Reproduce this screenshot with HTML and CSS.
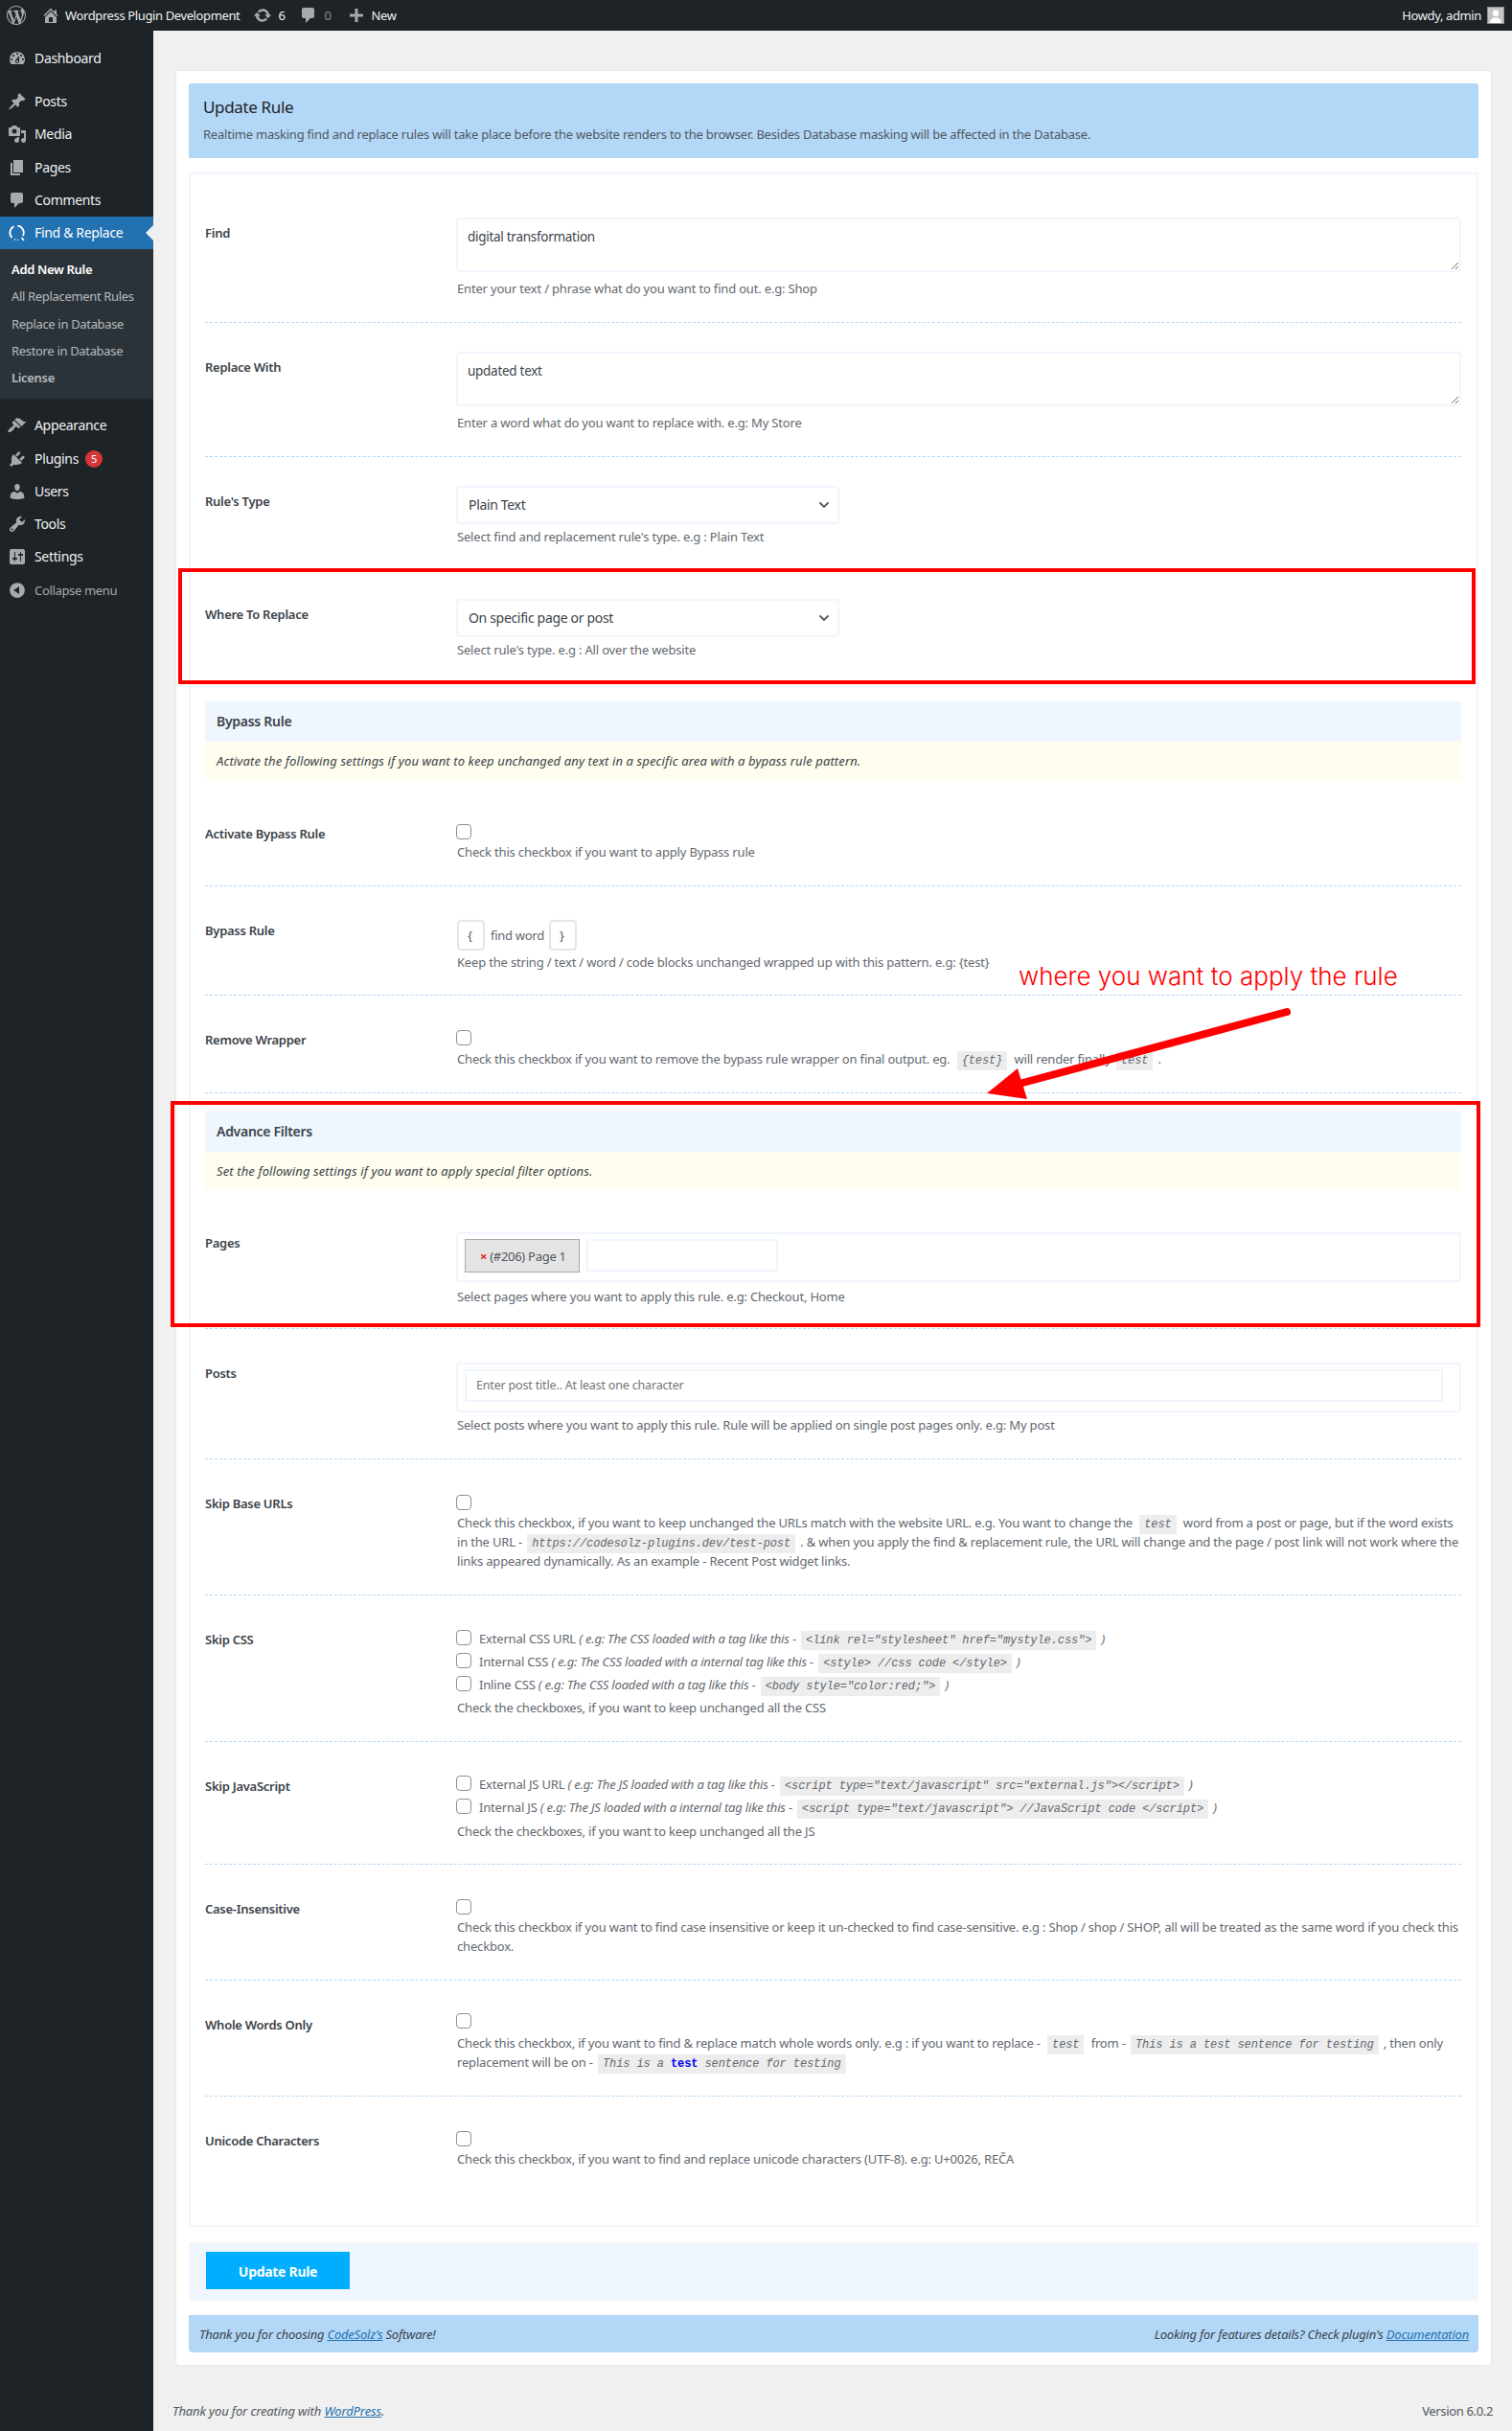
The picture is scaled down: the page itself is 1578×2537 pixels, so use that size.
FILE: index.html
```html
<!DOCTYPE html>
<html lang="en">
<head>
<meta charset="utf-8">
<title>Update Rule</title>
<link rel="stylesheet" href="styles.css">
</head>
<body>
<div class="adminbar">
  <svg class="ab-logo" viewBox="0 0 20 20"><path d="M20 10c0-5.51-4.49-10-10-10C4.48 0 0 4.49 0 10c0 5.52 4.48 10 10 10 5.51 0 10-4.48 10-10zM7.78 15.37L4.37 6.22c.55-.02 1.17-.08 1.17-.08.5-.06.44-1.13-.06-1.11 0 0-1.45.11-2.37.11-.18 0-.37 0-.58-.01C4.12 2.69 6.87 1.11 10 1.11c2.33 0 4.45.87 6.05 2.34-.68-.11-1.65.39-1.65 1.58 0 .74.45 1.36.9 2.1.35.61.55 1.36.55 2.46 0 1.49-1.4 5-1.4 5l-3.03-8.37c.54-.02.82-.17.82-.17.5-.05.44-1.25-.06-1.22 0 0-1.44.12-2.38.12-.87 0-2.33-.12-2.33-.12-.5-.03-.56 1.2-.06 1.22l.92.08 1.26 3.41zM17.41 10c.24-.64.74-1.87.43-4.25.7 1.29 1.05 2.71 1.05 4.25 0 3.29-1.73 6.24-4.4 7.78.97-2.59 1.94-5.2 2.92-7.78zM6.1 18.09C3.12 16.65 1.11 13.53 1.11 10c0-1.3.23-2.48.72-3.59C3.25 10.3 4.67 14.2 6.1 18.09zm4.03-6.63l2.58 6.98c-.86.29-1.76.45-2.71.45-.79 0-1.57-.11-2.29-.33.81-2.38 1.62-4.74 2.42-7.1z"/></svg>
  <svg class="ab-icon ab-home" viewBox="0 0 20 20"><path d="M16 8.5l1.53 1.53-1.06 1.06L10 4.62l-6.47 6.47-1.06-1.06L10 2.5l4 4v-2h2v4zm-6-2.46l6 5.99V18H4v-5.97zM12 17v-5H8v5h4z"/></svg>
  <span class="ab-text ab-site">Wordpress Plugin Development</span>
  <svg class="ab-icon ab-update" viewBox="0 0 20 20"><path d="M10.2 3.28c3.53 0 6.43 2.61 6.92 6h2.08l-3.5 4-3.5-4h2.32c-.45-1.97-2.21-3.45-4.32-3.45-1.45 0-2.73.71-3.54 1.78L4.95 5.66C6.23 4.2 8.11 3.28 10.2 3.28zm-.4 13.44c-3.52 0-6.43-2.61-6.92-6H.8l3.5-4c1.17 1.33 2.33 2.67 3.5 4H5.48c.45 1.97 2.21 3.45 4.32 3.45 1.45 0 2.73-.71 3.54-1.78l1.71 1.95c-1.28 1.46-3.15 2.38-5.25 2.38z"/></svg>
  <span class="ab-text ab-count">6</span>
  <svg class="ab-icon ab-comment" viewBox="0 0 20 20"><path d="M5 2h9c1.100 0 2 .9 2 2v7c0 1.100-.9 2-2 2h-2l-5 5v-5H5c-1.100 0-2-.9-2-2V4c0-1.100.9-2 2-2z"/></svg>
  <span class="ab-text ab-zero">0</span>
  <svg class="ab-icon ab-plus" viewBox="0 0 20 20"><path d="M17 8.500v3h-5.500V17h-3v-5.500H3v-3h5.500V3h3v5.500z"/></svg>
  <span class="ab-text ab-new">New</span>
  <span class="ab-text ab-howdy">Howdy, admin</span>
  <span class="ab-avatar"><svg viewBox="0 0 18 18"><circle cx="9" cy="6.500" r="3.600"/><path d="M2.500 18c0-4.500 3-6.500 6.500-6.500s6.500 2 6.500 6.500z"/></svg></span>
</div>

<div class="layout">
  <nav class="sidebar">
    <ul class="menu menu-first">
      <li class="menu-item"><svg viewBox="0 0 20 20"><path d="M3.760 16h12.480c1.100-1.370 1.760-3.110 1.760-5 0-4.420-3.580-8-8-8s-8 3.580-8 8c0 1.890.66 3.630 1.760 5zM10 4c.55 0 1 .45 1 1s-.45 1-1 1-1-.45-1-1 .45-1 1-1zM6 6c.55 0 1 .45 1 1s-.45 1-1 1-1-.45-1-1 .45-1 1-1zm8 0c.55 0 1 .45 1 1s-.45 1-1 1-1-.45-1-1 .45-1 1-1zm-5.370 5.550L12 7v6c0 1.100-.9 2-2 2s-2-.9-2-2c0-.57.24-1.080.63-1.450zM4 10c.55 0 1 .45 1 1s-.45 1-1 1-1-.45-1-1 .45-1 1-1zm12 0c.55 0 1 .45 1 1s-.45 1-1 1-1-.45-1-1 .45-1 1-1zm-5 3c0-.55-.45-1-1-1s-1 .45-1 1 .45 1 1 1 1-.45 1-1z"/></svg><span>Dashboard</span></li>
    </ul>
    <ul class="menu menu-group">
      <li class="menu-item"><svg viewBox="0 0 20 20"><path d="M10.440 3.020l1.820-1.820 6.360 6.350-1.830 1.820c-1.050-.68-2.480-.57-3.410.36l-.75.75c-.92.93-1.040 2.350-.35 3.410l-1.830 1.820-2.410-2.410-2.800 2.790c-.42.42-3.380 2.710-3.800 2.290s1.860-3.390 2.280-3.810l2.790-2.790L4.100 9.360l1.830-1.820c1.050.69 2.480.57 3.400-.36l.75-.75c.93-.92 1.050-2.350.36-3.410z"/></svg><span>Posts</span></li>
      <li class="menu-item"><svg viewBox="0 0 20 20"><path d="M13 11V4c0-.55-.45-1-1-1h-1.670L9 1H5L3.670 3H2c-.55 0-1 .45-1 1v7c0 .55.45 1 1 1h10c.55 0 1-.45 1-1zM7 4.500c1.380 0 2.500 1.120 2.500 2.500S8.380 9.500 7 9.500 4.500 8.380 4.500 7 5.620 4.500 7 4.500zM14 6h5v10.500c0 1.380-1.120 2.500-2.500 2.500S14 17.880 14 16.500s1.120-2.500 2.500-2.500c.17 0 .34.02.5.05V9h-3V6zm-4 8.050V13h2v3.500c0 1.380-1.120 2.500-2.500 2.500S7 17.880 7 16.500 8.120 14 9.500 14c.17 0 .34.02.5.05z"/></svg><span>Media</span></li>
      <li class="menu-item"><svg viewBox="0 0 20 20"><path d="M6 15V2h10v13H6zm-1 1h8v2H3V5h2v11z"/></svg><span>Pages</span></li>
      <li class="menu-item"><svg viewBox="0 0 20 20"><path d="M5 2h9c1.100 0 2 .9 2 2v7c0 1.100-.9 2-2 2h-2l-5 5v-5H5c-1.100 0-2-.9-2-2V4c0-1.100.9-2 2-2z"/></svg><span>Comments</span></li>
      <li class="menu-item current">
        <svg class="fr-icon" viewBox="0 0 20 20"><g fill="none" stroke="#fff" stroke-width="1.800"><path d="M6.500 3.300A7.300 7.300 0 0 0 4.500 15"/><path d="M10.500 2.700a7.300 7.300 0 0 1 5.500 10.500"/><path d="M7 16.800h.9M10 17.300h.9"/><path d="M14.500 15l2.500 3"/></g></svg>
        <span>Find &amp; Replace</span>
      </li>
      <li class="submenu">
        <a class="sub-item sub-current">Add New Rule</a>
        <a class="sub-item">All Replacement Rules</a>
        <a class="sub-item">Replace in Database</a>
        <a class="sub-item">Restore in Database</a>
        <a class="sub-item sub-bold">License</a>
      </li>
    </ul>
    <ul class="menu menu-group">
      <li class="menu-item"><svg viewBox="0 0 20 20"><path d="M14.480 11.060L7.410 3.990l1.500-1.500c.5-.56 2.300-.47 3.510.32 1.210.8 1.430 1.280 2.910 2.100 1.180.64 2.450 1.260 4.450.85zm-.71.71L6.700 4.700 4.930 6.470c-.39.39-.39 1.020 0 1.410l1.060 1.060c.39.39.39 1.030 0 1.420-.6.6-1.430 1.110-2.210 1.690-.35.26-.7.53-1.010.84C1.430 13.230.18 15.340.5 17c1.650.31 3.750-.93 5.090-2.290.3-.3.58-.66.84-1.020.58-.78 1.090-1.600 1.690-2.200.39-.39 1.020-.39 1.410 0l1.060 1.060c.39.39 1.030.39 1.420 0z"/></svg><span>Appearance</span></li>
      <li class="menu-item"><svg viewBox="0 0 20 20"><path d="M13.110 4.360L9.870 7.600 8 5.730l3.240-3.240c.35-.34 1.050-.2 1.560.32.52.51.66 1.210.31 1.550zm-8 1.770l.91-1.120 9.010 9.010-1.190.84c-.71.71-2.630 1.160-3.820 1.160H6.140L4.900 17.260c-.59.59-1.540.59-2.120 0-.59-.58-.59-1.530 0-2.120l1.240-1.240v-3.880c0-1.130.4-3.190 1.090-3.890zm7.260 3.970l3.240-3.240c.34-.35 1.040-.21 1.550.31.52.51.66 1.210.31 1.550l-3.240 3.250z"/></svg><span>Plugins</span><b class="badge">5</b></li>
      <li class="menu-item"><svg viewBox="0 0 20 20"><path d="M10 9.250c-2.270 0-2.730-3.440-2.730-3.440C7 4.020 7.820 2 9.970 2c2.160 0 2.980 2.020 2.710 3.810 0 0-.41 3.440-2.680 3.440zm0 2.570L12.720 10c2.390 0 4.520 2.330 4.520 4.530v2.490s-3.650 1.130-7.240 1.130c-3.650 0-7.240-1.130-7.240-1.130v-2.490c0-2.250 1.940-4.480 4.470-4.480z"/></svg><span>Users</span></li>
      <li class="menu-item"><svg viewBox="0 0 20 20"><path d="M16.680 9.770c-1.340 1.340-3.300 1.670-4.950.99l-5.410 6.520c-.99.99-2.590.99-3.580 0s-.99-2.590 0-3.570l6.520-5.420c-.68-1.650-.35-3.610.99-4.950 1.280-1.280 3.120-1.620 4.720-1.060l-2.890 2.890 2.820 2.820 2.860-2.870c.53 1.580.18 3.390-1.080 4.650zM3.810 16.210c.4.39 1.040.39 1.430 0 .4-.4.4-1.040 0-1.430-.39-.4-1.030-.4-1.430 0-.39.39-.39 1.030 0 1.430z"/></svg><span>Tools</span></li>
      <li class="menu-item"><svg viewBox="0 0 20 20"><path d="M18 16V4c0-1.100-.9-2-2-2H4c-1.100 0-2 .9-2 2v12c0 1.100.9 2 2 2h12c1.100 0 2-.9 2-2zM8 11h1c.55 0 1 .45 1 1s-.45 1-1 1H8v1.500c0 .28-.22.5-.5.5s-.5-.22-.5-.5V13H6c-.55 0-1-.45-1-1s.45-1 1-1h1V5.500c0-.28.22-.5.5-.5s.5.22.5.5V11zm5-2h-1c-.55 0-1-.45-1-1s.45-1 1-1h1V5.500c0-.28.22-.5.5-.5s.5.22.5.5V7h1c.55 0 1 .45 1 1s-.45 1-1 1h-1v5.500c0 .28-.22.5-.5.5s-.5-.22-.5-.5V9z"/></svg><span>Settings</span></li>
      <li class="menu-item collapse"><svg viewBox="0 0 20 20"><path d="M10 2.160c4.330 0 7.840 3.510 7.840 7.840s-3.510 7.840-7.840 7.840S2.160 14.330 2.160 10 5.710 2.160 10 2.160zm2 11.720V6.120L6.180 9.970z"/></svg><span>Collapse menu</span></li>
    </ul>
  </nav>

  <main class="main">
    <div class="card">
      <header class="card-head">
        <h1>Update Rule</h1>
        <p>Realtime masking find and replace rules will take place before the website renders to the browser. Besides Database masking will be affected in the Database.</p>
      </header>

      <div class="form-box">
        <div class="row">
          <div class="row-label">Find</div>
          <div class="ctl">
            <textarea class="area">digital transformation</textarea>
            <p class="help help-area">Enter your text / phrase what do you want to find out. e.g: Shop</p>
          </div>
        </div>
        <div class="row">
          <div class="row-label">Replace With</div>
          <div class="ctl">
            <textarea class="area">updated text</textarea>
            <p class="help help-area">Enter a word what do you want to replace with. e.g: My Store</p>
          </div>
        </div>
        <div class="row pb-24">
          <div class="row-label">Rule's Type</div>
          <div class="ctl">
            <select class="sel"><option>Plain Text</option></select>
            <p class="help">Select find and replacement rule's type. e.g : Plain Text</p>
          </div>
        </div>
        <div class="row pb-24">
          <div class="row-label">Where To Replace</div>
          <div class="ctl">
            <select class="sel"><option>On specific page or post</option></select>
            <p class="help">Select rule's type. e.g : All over the website</p>
          </div>
        </div>

        <div class="sec-head">Bypass Rule</div>
        <div class="sec-note">Activate the following settings if you want to keep unchanged any text in a specific area with a bypass rule pattern.</div>

        <div class="row first">
          <div class="row-label">Activate Bypass Rule</div>
          <div class="ctl t36">
            <input type="checkbox" class="chk">
            <p class="help">Check this checkbox if you want to apply Bypass rule</p>
          </div>
        </div>
        <div class="row pb-24">
          <div class="row-label">Bypass Rule</div>
          <div class="ctl t35">
            <div class="bypass">
              <input class="mini" value="{">
              <span class="bypass-word">find word</span>
              <input class="mini" value="}">
            </div>
            <p class="help help-tight">Keep the string / text / word / code blocks unchanged wrapped up with this pattern. e.g: {test}</p>
          </div>
        </div>
        <div class="row">
          <div class="row-label">Remove Wrapper</div>
          <div class="ctl t36">
            <input type="checkbox" class="chk">
            <p class="help help-4">Check this checkbox if you want to remove the bypass rule wrapper on final output. eg. <code class="gap">{test}</code> will render finally <code>test</code> .</p>
          </div>
        </div>

        <div class="sec-head">Advance Filters</div>
        <div class="sec-note note-39">Set the following settings if you want to apply special filter options.</div>

        <div class="row first pb-23">
          <div class="row-label">Pages</div>
          <div class="ctl t35">
            <div class="multi multi-pages">
              <span class="chip"><i class="chip-x">×</i>(#206) Page 1</span>
              <span class="multi-input"></span>
            </div>
            <p class="help help-5">Select pages where you want to apply this rule. e.g: Checkout, Home</p>
          </div>
        </div>
        <div class="row">
          <div class="row-label">Posts</div>
          <div class="ctl t35">
            <div class="multi multi-posts">
              <span class="multi-input wide">Enter post title.. At least one character</span>
            </div>
            <p class="help">Select posts where you want to apply this rule. Rule will be applied on single post pages only. e.g: My post</p>
          </div>
        </div>
        <div class="row">
          <div class="row-label">Skip Base URLs</div>
          <div class="ctl t37">
            <input type="checkbox" class="chk">
            <p class="help">Check this checkbox, if you want to keep unchanged the URLs match with the website URL. e.g. You want to change the <code class="gap">test</code> word from a post or page, but if the word exists in the URL - <code>https://codesolz-plugins.dev/test-post</code> . &amp; when you apply the find &amp; replacement rule, the URL will change and the page / post link will not work where the links appeared dynamically. As an example - Recent Post widget links.</p>
          </div>
        </div>
        <div class="row">
          <div class="row-label">Skip CSS</div>
          <div class="ctl t35">
            <div class="opt"><input type="checkbox" class="chk"><span>External CSS URL <em>( e.g: The CSS loaded with a tag like this - <code>&lt;link rel="stylesheet" href="mystyle.css"&gt;</code> )</em></span></div>
            <div class="opt"><input type="checkbox" class="chk"><span>Internal CSS <em>( e.g: The CSS loaded with a internal tag like this - <code>&lt;style&gt; //css code &lt;/style&gt;</code> )</em></span></div>
            <div class="opt"><input type="checkbox" class="chk"><span>Inline CSS <em>( e.g: The CSS loaded with a tag like this - <code>&lt;body style="color:red;"&gt;</code> )</em></span></div>
            <p class="help help-0">Check the checkboxes, if you want to keep unchanged all the CSS</p>
          </div>
        </div>
        <div class="row pb-24">
          <div class="row-label">Skip JavaScript</div>
          <div class="ctl t34">
            <div class="opt"><input type="checkbox" class="chk"><span>External JS URL <em>( e.g: The JS loaded with a tag like this - <code>&lt;script type="text/javascript" src="external.js"&gt;&lt;/script&gt;</code> )</em></span></div>
            <div class="opt"><input type="checkbox" class="chk"><span>Internal JS <em>( e.g: The JS loaded with a internal tag like this - <code>&lt;script type="text/javascript"&gt; //JavaScript code &lt;/script&gt;</code> )</em></span></div>
            <p class="help help-1">Check the checkboxes, if you want to keep unchanged all the JS</p>
          </div>
        </div>
        <div class="row">
          <div class="row-label">Case-Insensitive</div>
          <div class="ctl t36">
            <input type="checkbox" class="chk">
            <p class="help">Check this checkbox if you want to find case insensitive or keep it un-checked to find case-sensitive. e.g : Shop / shop / SHOP, all will be treated as the same word if you check this checkbox.</p>
          </div>
        </div>
        <div class="row">
          <div class="row-label">Whole Words Only</div>
          <div class="ctl t34">
            <input type="checkbox" class="chk">
            <p class="help help-5">Check this checkbox, if you want to find &amp; replace match whole words only. e.g : if you want to replace - <code class="gap">test</code> from - <code>This is a test sentence for testing</code> , then only replacement will be on - <code>This is a <b class="hl">test</b> sentence for testing</code></p>
          </div>
        </div>
        <div class="row row-last">
          <div class="row-label">Unicode Characters</div>
          <div class="ctl t36">
            <input type="checkbox" class="chk">
            <p class="help">Check this checkbox, if you want to find and replace unicode characters (UTF-8). e.g: U+0026, REČA</p>
          </div>
        </div>
      </div>

      <div class="submit-band"><button class="btn" type="button">Update Rule</button></div>
      <footer class="card-foot">
        <span>Thank you for choosing <a href="#">CodeSolz's</a> Software!</span>
        <span>Looking for features details? Check plugin's <a href="#">Documentation</a></span>
      </footer>
    </div>

    <footer class="wp-foot">
      <em>Thank you for creating with <a href="#">WordPress</a>.</em>
      <span class="wp-version">Version 6.0.2</span>
    </footer>
  </main>
</div>

<div class="mark mark-where"></div>
<div class="mark mark-filters"></div>
<div class="note-text">where you want to apply the rule</div>
<svg class="arrow" viewBox="0 0 340 100"><path class="arrow-line" d="M313 6L30 82"/><path class="arrow-head" d="M0 91L32 65L42 97z"/></svg>
</body>
</html>
```

FILE: styles.css
```css
* { box-sizing: border-box; }
html, body { margin: 0; padding: 0; }
body {
  position: relative;
  min-height: 2537px;
  background: #f0f0f0;
  color: #3c434a;
  font: 13px/20px "Noto Sans", "Open Sans", sans-serif;
  letter-spacing: -0.18px;
}
ul { list-style: none; margin: 0; padding: 0; }
p, h1 { margin: 0; }
a { color: #2271b1; }

/* admin bar */
.adminbar {
  display: flex;
  align-items: center;
  height: 32px;
  background: #1d2327;
  color: #f0f0f1;
  letter-spacing: -0.38px;
}
.adminbar svg { display: block; fill: #a7aaad; }
.ab-logo { width: 20px; height: 20px; margin-left: 7px; }
.ab-icon { width: 20px; height: 20px; }
.ab-text { line-height: 32px; white-space: nowrap; }
.ab-home { margin-left: 16px; }
.ab-site { margin-left: 5px; }
.ab-update { margin-left: 14px; }
.ab-count { margin-left: 6px; }
.ab-comment { margin-left: 15px; }
.ab-zero { margin-left: 6px; color: #8c8f94; }
.ab-plus { margin-left: 16px; }
.ab-new { margin-left: 6px; }
.ab-howdy { margin-left: auto; }
.ab-avatar {
  width: 18px;
  height: 18px;
  margin: 0 8px 0 6px;
  background: #c4c4c4;
  border: 1px solid #8c8f94;
  overflow: hidden;
}
.adminbar .ab-avatar svg { width: 16px; height: 16px; fill: #fff; }

/* layout */
.layout { display: flex; min-height: 2505px; }
.sidebar { flex: 0 0 160px; background: #1d2327; padding-top: 12px; letter-spacing: -0.33px; }
.main { flex: 1; display: flex; flex-direction: column; min-width: 0; }

/* sidebar */
.menu-group { margin-top: 11px; }
.menu-item {
  position: relative;
  display: flex;
  align-items: center;
  height: 34.25px;
  font-size: 14px;
  color: #f0f0f1;
}
.menu-first .menu-item { height: 34px; }
.menu-item svg { flex: none; width: 20px; height: 20px; margin: 0 8px; fill: #a7aaad; }
.menu-item.current { background: #2271b1; color: #fff; }
.menu-item.current::after {
  content: "";
  position: absolute;
  right: 0;
  top: 9px;
  border: 8px solid transparent;
  border-right-color: #f0f0f0;
  border-left-width: 0;
}
.submenu { background: #2c3338; padding: 7px 0 8px; }
.sub-item {
  display: block;
  height: 28.2px;
  padding-left: 12px;
  line-height: 28px;
  font-size: 13px;
  color: rgba(240, 246, 252, .7);
}
.sub-current { color: #fff; font-weight: 600; }
.sub-bold { font-weight: 600; }
.badge {
  width: 18px;
  height: 18px;
  margin-left: 7px;
  border-radius: 50%;
  background: #d63638;
  color: #fff;
  font: 11px/18px "Noto Sans", sans-serif;
  text-align: center;
}
.collapse { color: #a7aaad; font-size: 13px; }

/* card */
.card {
  margin: 42px 22px 0 24px;
  padding: 13px;
  background: #fff;
  border-radius: 3px;
  box-shadow: 0 0 2px rgba(120, 90, 100, .15);
}
.card-head {
  height: 78px;
  padding: 12px 15px;
  background: #b3d7f7;
  border-radius: 3px 3px 0 0;
}
.card-head h1 {
  font-size: 17px;
  line-height: 26px;
  font-weight: 400;
  color: #1d2327;
  letter-spacing: -0.35px;
}
.card-head p { margin-top: 5px; color: #50575e; letter-spacing: -0.22px; }

.form-box {
  margin-top: 15px;
  padding: 15px 16px 0 15px;
  border: 2px solid #eff6fd;
}
.row {
  display: grid;
  grid-template-columns: 263px 1fr;
  padding-bottom: 25px;
  border-bottom: 1px dashed #b3d7f7;
}
.row.first { margin-top: 10px; }
.pb-24 { padding-bottom: 24px; }
.pb-23 { padding-bottom: 23px; }
.row-last { border-bottom: 0; padding-bottom: 59px; }
.row-label { padding-top: 36px; font-weight: 600; color: #3c434a; letter-spacing: -0.27px; }
.ctl { padding-top: 30px; min-width: 0; margin-left: -1px; }
.t34 { padding-top: 34px; }
.t35 { padding-top: 35px; }
.t36 { padding-top: 36px; }
.t37 { padding-top: 37px; }

.help { margin-top: 3px; color: #646970; }
.help-area { margin-top: 7px; }
.help-tight { margin-top: 2px; }
.help-4 { margin-top: 4px; }
.help-5 { margin-top: 5px; }
.help-0 { margin-top: 0; }
.help-1 { margin-top: 1px; }
.ctl > .help { margin-left: 1px; margin-right: -3px; }

code {
  padding: 3px 5px;
  margin: 0 2px;
  background: #ededed;
  font: italic 12px/1 "Liberation Mono", "DejaVu Sans Mono", monospace;
  letter-spacing: -0.1px;
  color: #646970;
}
code.gap { margin: 0 4px; }
.hl { color: #00f; font-style: normal; }
em { font-style: italic; }

.area {
  display: block;
  width: 100%;
  height: 57px;
  padding: 8px 10px;
  border: 2px solid #eff6fd;
  border-radius: 4px;
  background: #fff;
  color: #3c434a;
  font: 13.500px/20px "Noto Sans", "Open Sans", sans-serif;
  letter-spacing: -0.28px;
  outline: 0;
}
.sel {
  display: block;
  width: 400px;
  height: 40px;
  padding: 0 30px 0 11px;
  border: 2px solid #eff6fd;
  border-radius: 4px;
  color: #3c434a;
  font: 14px/20px "Noto Sans", "Open Sans", sans-serif;
  letter-spacing: -0.33px;
  appearance: none;
  background: #fff url("data:image/svg+xml,%3Csvg xmlns='http://www.w3.org/2000/svg' width='12' height='8' viewBox='0 0 12 8'%3E%3Cpath d='M1.500 1.500L6 6l4.500-4.500' fill='none' stroke='%2350575e' stroke-width='1.800'/%3E%3C/svg%3E") no-repeat right 8px center;
}
.chk {
  appearance: none;
  display: block;
  flex: none;
  width: 16px;
  height: 16px;
  margin: 0;
  background: #fff;
  border: 1px solid #8c8f94;
  border-radius: 4px;
}

.bypass { display: flex; align-items: center; margin-left: 1px; letter-spacing: -0.28px; }
.mini {
  width: 29px;
  height: 32px;
  padding: 0 0 0 9px;
  border: 2px solid #e4e6e8;
  border-radius: 4px;
  background: #fff;
  color: #50575e;
  font: inherit;
}
.bypass-word { margin: 0 5px 0 6px; color: #646970; white-space: nowrap; }

.sec-head {
  display: flex;
  align-items: center;
  height: 42px;
  margin-top: 19px;
  padding-left: 12px;
  background: #eff6fd;
  font-size: 14px;
  font-weight: 600;
  color: #3c434a;
  letter-spacing: -0.28px;
}
.sec-note {
  display: flex;
  align-items: center;
  height: 40px;
  padding-left: 12px;
  background: #fffdee;
  font-style: italic;
  color: #3c434a;
  letter-spacing: 0.12px;
}
.note-39 { height: 39px; }

.multi {
  display: flex;
  gap: 7px;
  padding: 5px 7px;
  border: 2px solid #eff6fd;
  border-radius: 3px;
  background: #fff;
}
.multi-pages { height: 52px; }
.multi-posts { height: 52px; }
.chip {
  display: block;
  height: 35px;
  width: 120px;
  padding-left: 15px;
  background: #e4e4e4;
  border: 1px solid #aaa;
  line-height: 34px;
  color: #50575e;
  letter-spacing: -0.28px;
}
.chip-x { color: #e00; font-style: normal; font-weight: 600; margin-right: 3px; }
.multi-input {
  display: block;
  width: 200px;
  height: 34px;
  border: 2px solid #eff6fd;
}
.multi-input.wide {
  width: auto;
  flex: 1;
  margin-right: 10px;
  padding-left: 10px;
  font-size: 12.500px;
  line-height: 30px;
  color: #757575;
}

.opt { display: flex; align-items: flex-start; gap: 8px; height: 24px; white-space: nowrap; color: #646970; }
.opt .chk { margin-top: 1px; }

/* bottom */
.submit-band {
  margin-top: 16px;
  height: 61px;
  padding: 10px 18px;
  background: #eff6fd;
}
.btn {
  display: block;
  width: 150px;
  height: 39px;
  border: 0;
  background: #00aeff;
  color: #fff;
  font: 700 14px/39px "Noto Sans", sans-serif;
  letter-spacing: -0.3px;
}
.card-foot {
  display: flex;
  justify-content: space-between;
  align-items: center;
  height: 39px;
  margin-top: 15px;
  padding: 0 10px 0 11px;
  background: #b3d7f7;
  border-radius: 0 0 4px 4px;
  font-style: italic;
  color: #3c434a;
  letter-spacing: -0.22px;
}
.wp-foot {
  display: flex;
  justify-content: space-between;
  margin-top: 38px;
  padding: 0 20px;
  color: #50575e;
  letter-spacing: -0.12px;
}
.wp-version { letter-spacing: -0.35px; }

/* annotations over the page */
.mark { position: absolute; border: 4px solid #f00; }
.mark-where { left: 186px; top: 593px; width: 1354px; height: 121px; }
.mark-filters { left: 178px; top: 1149px; width: 1367px; height: 236px; }
.note-text {
  position: absolute;
  left: 1063px;
  top: 1002px;
  font: 300 26px/34px Inter, sans-serif;
  letter-spacing: 0;
  white-space: nowrap;
  color: #f00;
}
.arrow { position: absolute; left: 1030px; top: 1050px; width: 340px; height: 100px; }
.arrow-line { fill: none; stroke: #f00; stroke-width: 8; stroke-linecap: round; }
.arrow-head { fill: #f00; }
```
